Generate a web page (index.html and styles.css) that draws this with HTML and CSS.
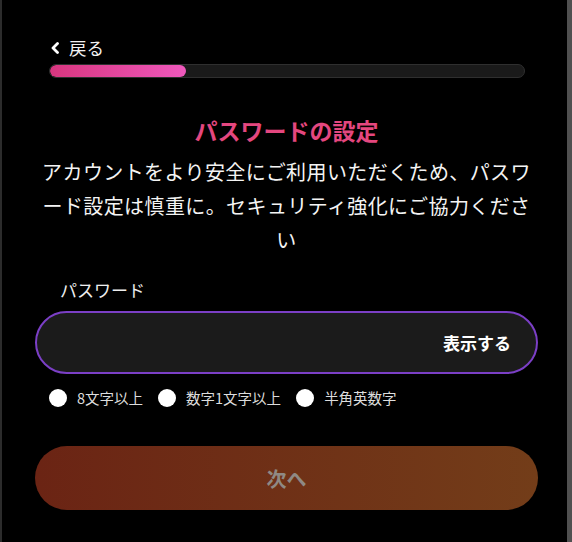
FILE: index.html
```html
<!DOCTYPE html>
<html lang="ja">
<head>
<meta charset="utf-8">
<title>パスワードの設定</title>
<link rel="stylesheet" href="styles.css">
</head>
<body>
<div class="page">
  <div class="back">
    <svg class="chev" width="10" height="12" viewBox="0 0 10 12"><path d="M7.5 1.5 L3 6 L7.5 10.5" fill="none" stroke="#fff" stroke-width="2.8" stroke-linecap="round" stroke-linejoin="round"/></svg>
    <span>戻る</span>
  </div>
  <div class="progress"><div class="fill" style="width:28.6%"></div></div>
  <h1 class="title">パスワードの設定</h1>
  <p class="desc">アカウントをより安全にご利用いただくため、パスワード設定は慎重に。セキュリティ強化にご協力ください</p>
  <div class="label">パスワード</div>
  <div class="input">
    <span class="show">表示する</span>
  </div>
  <div class="checks">
    <div class="check"><span class="dot"></span><span>8文字以上</span></div>
    <div class="check"><span class="dot"></span><span>数字1文字以上</span></div>
    <div class="check"><span class="dot"></span><span>半角英数字</span></div>
  </div>
  <div class="next">次へ</div>
</div>
</body>
</html>
```
FILE: styles.css
```css
html, body {
  margin: 0;
  padding: 0;
  background: #000;
}
body {
  width: 572px;
  height: 542px;
  box-sizing: border-box;
  border-left: 2px solid #2c2c2c;
  border-right: 5px solid #505050;
  font-family: "Noto Sans CJK JP", "Noto Sans", sans-serif;
  color: #fff;
  overflow: hidden;
}
.page {
  padding: 38px 29px 0 33px;
}
.back {
  height: 20px;
  display: flex;
  align-items: center;
  gap: 9px;
  padding-left: 15px;
  font-size: 17.5px;
  line-height: 20px;
  color: #f2f2f2;
}
.chev {
  display: block;
}
.progress {
  margin: 6px 13px 0 14px;
  height: 14px;
  box-sizing: border-box;
  border: 1px solid #2f2f2f;
  border-radius: 7px;
  background: #1a1a1a;
  overflow: hidden;
}
.fill {
  height: 100%;
  border-radius: 7px;
  background: linear-gradient(90deg, #d8367f, #ee58bc);
}
.title {
  margin: 37px 0 0;
  text-align: center;
  font-size: 23px;
  line-height: 30px;
  font-weight: 700;
  color: #e4477f;
}
.desc {
  margin: 10px 0 0;
  text-align: center;
  font-size: 20px;
  letter-spacing: 0.4px;
  line-height: 34px;
  color: #f4f4f4;
}
.label {
  margin-top: 21px;
  padding-left: 25px;
  font-size: 17px;
  line-height: 24px;
  color: #eee;
}
.input {
  margin-top: 9px;
  height: 63px;
  box-sizing: border-box;
  border: 2px solid #7b3fc6;
  border-radius: 32px;
  background: #1b1b1b;
  display: flex;
  align-items: center;
  justify-content: flex-end;
  padding-right: 25px;
}
.show {
  font-size: 17px;
  font-weight: 700;
  color: #fff;
}
.checks {
  margin-top: 14px;
  height: 20px;
  display: flex;
  align-items: center;
  gap: 15px;
  padding-left: 14px;
}
.check {
  display: flex;
  align-items: center;
  gap: 10px;
  font-size: 14.5px;
  line-height: 20px;
  color: #ddd;
}
.dot {
  width: 18px;
  height: 18px;
  border-radius: 50%;
  background: #fff;
}
.next {
  margin-top: 38px;
  height: 64px;
  border-radius: 32px;
  background: linear-gradient(90deg, #6b2414, #733d19);
  display: flex;
  align-items: center;
  justify-content: center;
  font-size: 20px;
  font-weight: 700;
  color: #8f8984;
}
```
